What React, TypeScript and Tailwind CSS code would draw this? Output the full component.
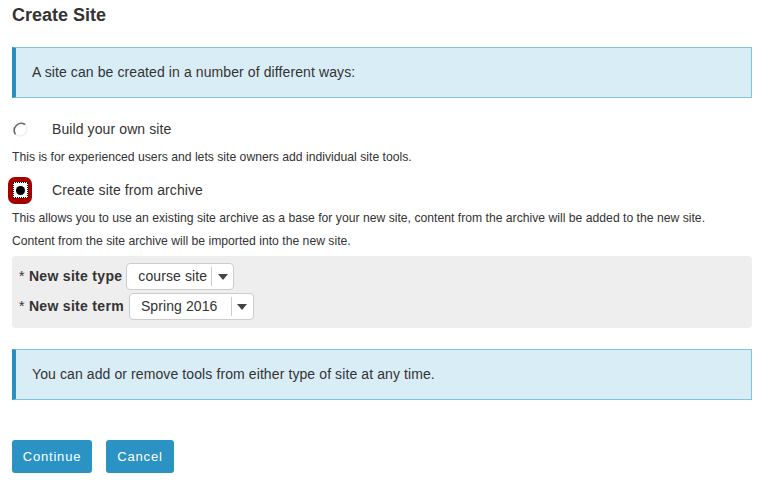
import { useState } from 'react'

function RadioIdle() {
  return (
    <svg width="16" height="16" viewBox="0 0 16 16">
      <circle cx="8" cy="8" r="7" fill="#fff" stroke="#f0f0f0" strokeWidth="1.5" />
      <path d="M12.6 3.2 A7 7 0 0 0 3.2 12.8" fill="none" stroke="#6b6b6b" strokeWidth="1.6" strokeLinecap="round" />
    </svg>
  )
}

function RadioChecked() {
  return (
    <div className="w-[24px] h-[27px] rounded-[7px] bg-[#a30000] flex items-center justify-center">
      <div className="w-[15px] h-[16px] bg-white border border-dotted border-black flex items-center justify-center">
        <div className="w-[9px] h-[9px] rounded-full bg-black" />
      </div>
    </div>
  )
}

function Select({ value, width }: { value: string; width: string }) {
  return (
    <div className={`${width} h-[27px] bg-white border border-[#ccc] rounded-[4px] flex items-center`}>
      <span className="flex-1 pl-[11px] text-[14px] tracking-[0.1px] text-[#333]">{value}</span>
      <div className="w-[22px] h-[19px] border-l border-[#ccc] flex items-center justify-center">
        <svg width="10" height="6" viewBox="0 0 10 6"><path d="M0 0 L10 0 L5 6 Z" fill="#444" /></svg>
      </div>
    </div>
  )
}

export default function App() {
  const [choice, setChoice] = useState('archive')

  return (
    <div className="w-[770px] h-[484px] bg-white pl-[12px] pr-[18px] text-[#333] font-['Liberation_Sans',Arial,sans-serif] flex flex-col">
      <h1 className="h-[31px] leading-[31px] text-[18px] font-bold">Create Site</h1>

      <div className="mt-[16px] h-[51px] bg-[#d9edf7] border border-[#7fc4e3] border-l-[4px] border-l-[#2a8fc1] flex items-center pl-[16px] text-[14px] tracking-[0.1px]">
        A site can be created in a number of different ways:
      </div>

      <label className="mt-[19px] h-[24px] flex items-center cursor-pointer" onClick={() => setChoice('own')}>
        <span className="w-[40px] flex items-center">
          {choice === 'own' ? <RadioChecked /> : <RadioIdle />}
        </span>
        <span className="text-[14px] tracking-[0.1px]">Build your own site</span>
      </label>
      <p className="mt-[7px] h-[18px] leading-[18px] text-[12.2px]">
        This is for experienced users and lets site owners add individual site tools.
      </p>

      <label className="mt-[12px] h-[24px] flex items-center cursor-pointer -ml-[4px]" onClick={() => setChoice('archive')}>
        <span className="w-[44px] flex items-center">
          {choice === 'archive' ? <RadioChecked /> : <span className="ml-[4px]"><RadioIdle /></span>}
        </span>
        <span className="text-[14px] tracking-[0.1px]">Create site from archive</span>
      </label>
      <p className="mt-[7px] h-[18px] leading-[18px] text-[12.2px]">
        This allows you to use an existing site archive as a base for your new site, content from the archive will be added to the new site.
      </p>
      <p className="mt-[5px] h-[18px] leading-[18px] text-[12.2px]">
        Content from the site archive will be imported into the new site.
      </p>

      <div className="mt-[6px] h-[72px] bg-[#eee] rounded-[4px] pl-[7px] pt-[7px] flex flex-col gap-[3px]">
        <div className="flex items-center gap-[4px]">
          <span className="text-[14px] tracking-[0.3px]">* <b>New site type</b></span>
          <Select value="course site" width="w-[108px]" />
        </div>
        <div className="flex items-center gap-[5px]">
          <span className="text-[14px] tracking-[0.3px]">* <b>New site term</b></span>
          <Select value="Spring 2016" width="w-[125px]" />
        </div>
      </div>

      <div className="mt-[21px] h-[51px] bg-[#d9edf7] border border-[#7fc4e3] border-l-[4px] border-l-[#2a8fc1] flex items-center pl-[16px] text-[14px] tracking-[0.1px]">
        You can add or remove tools from either type of site at any time.
      </div>

      <div className="mt-[40px] flex gap-[14px]">
        <button className="h-[33px] w-[80px] rounded-[3px] bg-[#2b93c4] text-white text-[13px] tracking-[0.8px]">Continue</button>
        <button className="h-[33px] w-[68px] rounded-[3px] bg-[#2b93c4] text-white text-[13px] tracking-[0.8px]">Cancel</button>
      </div>
    </div>
  )
}
